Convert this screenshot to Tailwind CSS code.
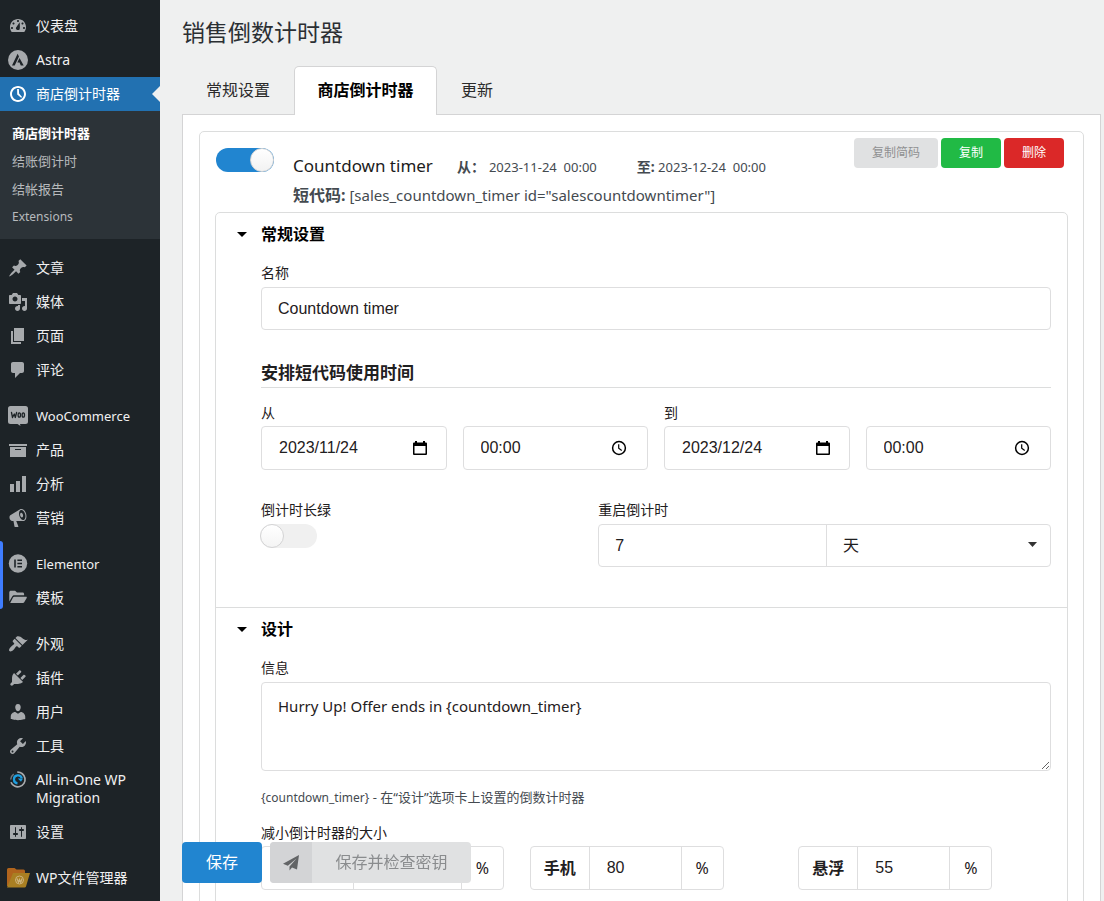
<!DOCTYPE html>
<html lang="zh-CN">
<head>
<meta charset="utf-8">
<title>销售倒数计时器</title>
<script src="https://cdn.jsdelivr.net/npm/@tailwindcss/browser@4"></script>
</head>
<body class="flex h-screen overflow-hidden bg-[#eff0f0] font-['Noto_Sans','Noto_Sans_CJK_SC',sans-serif] text-sm text-black">

<aside class="relative w-40 shrink-0 bg-[#1d2327] pt-[9px] text-[#f0f0f1]">
  <span class="absolute top-[541px] left-0 h-[68px] w-[3px] rounded-r bg-[#3f7dff]"></span>
  <nav class="flex flex-col gap-3">
    <ul>
      <li><a href="#" class="flex gap-2 py-2 pl-2 leading-[18px]">
        <svg class="-my-px size-5 shrink-0 fill-[#a7aaad]" viewBox="0 0 20 20"><path fill-rule="evenodd" d="M3.760 16h12.480C17.340 14.630 18 12.900 18 11c0-4.410-3.580-8-8-8s-8 3.590-8 8c0 1.900.66 3.630 1.760 5zM9 5c0-.55.45-1 1-1s1 .45 1 1c0 .56-.45 1-1 1s-1-.44-1-1zM4.500 7.500c0-.55.45-1 1-1s1 .45 1 1c0 .56-.45 1-1 1s-1-.44-1-1zm4.020 3.400c.84-.83 3.100-4.600 3.100-4.600s.75 6.280-.08 7.110c-.84.84-2.180.84-3.020 0-.83-.83-.83-1.680 0-2.510zM3 12c0-.55.45-1 1-1s1 .45 1 1c0 .56-.45 1-1 1s-1-.44-1-1zM15 12c0-.55.45-1 1-1s1 .45 1 1c0 .56-.45 1-1 1s-1-.44-1-1zM13.500 7.500c0-.55.45-1 1-1s1 .45 1 1c0 .56-.45 1-1 1s-1-.44-1-1z"/></svg>
        <span>仪表盘</span></a></li>
      <li><a href="#" class="flex gap-2 py-2 pl-2 leading-[18px]">
        <svg class="-my-px size-5 shrink-0" viewBox="0 0 20 20"><circle cx="10" cy="10" r="10" fill="#a7aaad"/><path fill="#1d2327" d="M9.600 3.800 4 15.400h2.700l4.300-8.800zM11.500 8 9.300 12.600h2.200l1.300 2.800h2.900z"/></svg>
        <span>Astra</span></a></li>
      <li class="relative"><a href="#" class="flex gap-2 bg-[#2271b1] py-2 pl-2 leading-[18px] text-white">
        <svg class="-my-px size-5 shrink-0 fill-white" viewBox="0 0 20 20"><path d="M10 2c4.420 0 8 3.580 8 8s-3.580 8-8 8-8-3.580-8-8 3.580-8 8-8zm0 14c3.310 0 6-2.690 6-6s-2.690-6-6-6-6 2.690-6 6 2.690 6 6 6zM9.100 5h1.800l.2 4.500 3 3.500-1 .8L9.200 10.500z"/></svg>
        <span>商店倒计时器</span></a>
        <span class="absolute top-[9px] right-0 border-y-8 border-r-8 border-y-transparent border-r-[#eff0f0]"></span>
        <ul class="bg-[#2c3338] pt-2 pb-2 text-[13px] leading-7 text-[#b7babd]">
          <li><a href="#" class="block pl-3 font-bold text-white">商店倒计时器</a></li>
          <li><a href="#" class="block pl-3">结账倒计时</a></li>
          <li><a href="#" class="block pl-3">结帐报告</a></li>
          <li><a href="#" class="block pl-3 text-xs leading-7">Extensions</a></li>
        </ul></li>
    </ul>
    <ul>
      <li><a href="#" class="flex gap-2 py-2 pl-2 leading-[18px]">
        <svg class="-my-px size-5 shrink-0 fill-[#a7aaad]" viewBox="0 0 20 20"><path d="M10.440 3.020l1.820-1.820 6.360 6.350-1.830 1.820c-1.050-.68-2.480-.57-3.410.36l-.75.75c-.92.93-1.040 2.350-.35 3.410l-1.830 1.820-2.410-2.410-2.800 2.790c-.42.42-3.380 2.710-3.800 2.290s1.860-3.390 2.280-3.810l2.790-2.790L4.100 9.360l1.830-1.820c1.050.69 2.480.57 3.400-.36l.75-.75c.93-.92 1.050-2.350.36-3.410z"/></svg>
        <span>文章</span></a></li>
      <li><a href="#" class="flex gap-2 py-2 pl-2 leading-[18px]">
        <svg class="-my-px size-5 shrink-0 fill-[#a7aaad]" viewBox="0 0 20 20"><path fill-rule="evenodd" d="M13 11V4c0-.55-.45-1-1-1h-1.670L9 1H5L3.670 3H2c-.55 0-1 .45-1 1v7c0 .55.45 1 1 1h10c.55 0 1-.45 1-1zM7 4.500c1.380 0 2.500 1.120 2.500 2.500S8.380 9.500 7 9.500 4.500 8.380 4.500 7 5.620 4.500 7 4.500zM14 6h5v10.500c0 1.380-1.120 2.500-2.500 2.500S14 17.880 14 16.500s1.120-2.500 2.500-2.500c.17 0 .34.02.5.05V9h-3V6zm-4 8.050V13h2v3.500c0 1.380-1.120 2.500-2.500 2.500S7 17.880 7 16.500 8.120 14 9.500 14c.17 0 .34.02.5.05z"/></svg>
        <span>媒体</span></a></li>
      <li><a href="#" class="flex gap-2 py-2 pl-2 leading-[18px]">
        <svg class="-my-px size-5 shrink-0 fill-[#a7aaad]" viewBox="0 0 20 20"><path d="M6 15V2h10v13H6zm-1 1h8v2H3V5h2v11z"/></svg>
        <span>页面</span></a></li>
      <li><a href="#" class="flex gap-2 py-2 pl-2 leading-[18px]">
        <svg class="-my-px size-5 shrink-0 fill-[#a7aaad]" viewBox="0 0 20 20"><path d="M5 2h9c1.100 0 2 .9 2 2v7c0 1.100-.9 2-2 2h-2l-5 5v-5H5c-1.100 0-2-.9-2-2V4c0-1.100.9-2 2-2z"/></svg>
        <span>评论</span></a></li>
    </ul>
    <ul>
      <li><a href="#" class="flex gap-2 py-2 pl-2 leading-[18px]">
        <svg class="-my-px size-5 shrink-0" viewBox="0 0 20 20"><path fill="#a7aaad" d="M2.500 0h15A2.500 2.500 0 0 1 20 2.500v13a2.500 2.500 0 0 1-2.500 2.500H12l.5 2-3-2h-7A2.500 2.500 0 0 1 0 15.500v-13A2.500 2.500 0 0 1 2.500 0z"/><g fill="none" stroke="#1d2327" stroke-width="1.300" stroke-linecap="round" stroke-linejoin="round"><path d="M3.500 6.500l1 5L6.300 8l1 3.500 1.300-5"/><ellipse cx="11.300" cy="9" rx="1.200" ry="2.200"/><ellipse cx="15.300" cy="9" rx="1.200" ry="2.200"/></g></svg>
        <span class="text-[13px] leading-[18px]">WooCommerce</span></a></li>
      <li><a href="#" class="flex gap-2 py-2 pl-2 leading-[18px]">
        <svg class="-my-px size-5 shrink-0 fill-[#a7aaad]" viewBox="0 0 20 20"><path d="M19 4v2H1V4h18zM2 7h16v10H2V7zm11 3V9H7v1h6z"/></svg>
        <span>产品</span></a></li>
      <li><a href="#" class="flex gap-2 py-2 pl-2 leading-[18px]">
        <svg class="-my-px size-5 shrink-0 fill-[#a7aaad]" viewBox="0 0 20 20"><path d="M18 18V2h-4v16h4zm-6 0V7H8v11h4zm-6 0v-8H2v8h4z"/></svg>
        <span>分析</span></a></li>
      <li><a href="#" class="flex gap-2 py-2 pl-2 leading-[18px]">
        <svg class="-my-px size-5 shrink-0 fill-[#a7aaad]" viewBox="0 0 20 20"><path fill-rule="evenodd" d="M18.150 5.940c.46 1.620.38 3.220-.02 4.480-.42 1.280-1.260 2.180-2.300 2.480-.16.06-.26.06-.4.06-.06.02-.12.02-.18.02-.06.02-.14.02-.22.02h-6.800l2.220 5.500c.02.14-.06.26-.14.34-.08.1-.24.16-.34.16H6.950c-.1 0-.26-.06-.34-.16-.08-.08-.16-.2-.14-.34l-1-5.500H4.250l-.02-.02c-.5.06-1.080-.18-1.540-.62s-.88-1.080-1.060-1.880c-.24-.8-.2-1.560-.02-2.200.18-.62.58-1.080 1.060-1.300l.02-.02 9-5.400c.1-.06.18-.1.24-.16.06-.04.14-.08.24-.12.16-.08.28-.12.5-.18 1.040-.3 2.240.1 3.220.98s1.840 2.240 2.260 3.860zm-2.580 5.980h-.02c.4-.1.74-.34 1.040-.7.58-.7.86-1.760.86-3.040 0-.64-.1-1.300-.28-1.980-.34-1.360-1.020-2.500-1.780-3.240s-1.680-1.100-2.460-.88c-.82.22-1.400.96-1.700 2-.32 1.040-.28 2.360.06 3.720.38 1.360 1 2.500 1.800 3.240.78.74 1.620 1.100 2.480.88zm-2.540-7.080c.22-.04.42-.02.62.04.38.16.76.48 1.020 1s.42 1.200.42 1.780c0 .3-.04.56-.12.8-.18.48-.44.84-.86.94-.34.1-.8-.06-1.140-.4s-.64-.86-.78-1.500c-.18-.62-.12-1.240.02-1.720s.48-.84.82-.94z"/></svg>
        <span>营销</span></a></li>
    </ul>
    <ul>
      <li><a href="#" class="flex gap-2 py-2 pl-2 leading-[18px]">
        <svg class="-my-px size-5 shrink-0" viewBox="0 0 20 20"><circle cx="10" cy="9.500" r="9.200" fill="#a7aaad"/><path fill="#1d2327" d="M6.200 5.500h1.600v8H6.200zM9.400 5.500h4.600v1.400H9.400zM9.400 8.800h4.600v1.400H9.400zM9.400 12.100h4.600v1.400H9.400z"/></svg>
        <span class="text-[13px] leading-[18px]">Elementor</span></a></li>
      <li><a href="#" class="flex gap-2 py-2 pl-2 leading-[18px]">
        <svg class="-my-px size-5 shrink-0 fill-[#a7aaad]" viewBox="0 0 20 20"><path d="M1.300 13.500V4.300c0-.9.700-1.600 1.600-1.600h4.200l1.900 1.900h5.600c.9 0 1.500.6 1.500 1.500v1.100H6.400c-1 0-1.700.5-2.200 1.300zM2.200 15 5 9.600c.3-.5.7-.8 1.300-.8h11.800c.6 0 .9.600.6 1.100l-2.500 4.400c-.3.500-.7.7-1.200.7z"/></svg>
        <span>模板</span></a></li>
    </ul>
    <ul>
      <li><a href="#" class="flex gap-2 py-2 pl-2 leading-[18px]">
        <svg class="-my-px size-5 shrink-0 fill-[#a7aaad]" viewBox="0 0 20 20"><path d="M14.480 11.060L7.410 3.990l1.500-1.500c.5-.56 2.300-.47 3.510.32 1.210.8 1.430 1.280 2.910 2.100 1.180.64 2.450 1.260 4.450.85zm-.71.71L6.700 4.700 4.930 6.470c-.39.39-.39 1.020 0 1.410l1.060 1.060c.39.39.39 1.030 0 1.420-.6.6-1.430 1.110-2.210 1.690-.35.26-.7.53-1.010.84C1.430 14.230.4 16.080 1.400 17.070c.99 1 2.840-.03 4.180-1.360.31-.31.58-.66.85-1.020.57-.78 1.080-1.610 1.690-2.210.39-.39 1.020-.39 1.410 0l1.060 1.060c.39.39 1.020.39 1.410 0z"/></svg>
        <span>外观</span></a></li>
      <li><a href="#" class="flex gap-2 py-2 pl-2 leading-[18px]">
        <svg class="-my-px size-5 shrink-0 fill-[#a7aaad]" viewBox="0 0 20 20"><path d="M13.110 4.360L9.870 7.600 8 5.730l3.240-3.240c.35-.34 1.050-.2 1.560.32.52.51.66 1.210.31 1.550zm-8 1.770l.91-1.120 9.010 9.010-1.190.84c-.71.71-2.630 1.160-3.820 1.160H6.140L4.900 17.260c-.59.59-1.540.59-2.120 0-.59-.58-.59-1.530 0-2.120l1.240-1.240v-3.880c0-1.130.4-3.190 1.090-3.890zm7.260 3.970l3.240-3.240c.34-.35 1.040-.21 1.550.31.52.51.66 1.210.31 1.550l-3.240 3.250z"/></svg>
        <span>插件</span></a></li>
      <li><a href="#" class="flex gap-2 py-2 pl-2 leading-[18px]">
        <svg class="-my-px size-5 shrink-0 fill-[#a7aaad]" viewBox="0 0 20 20"><path d="M10 9.250c-2.270 0-2.730-3.440-2.730-3.440C7 4.020 7.820 2 9.970 2c2.160 0 2.980 2.020 2.710 3.810 0 0-.41 3.440-2.680 3.440zm0 2.570L12.720 10c2.390 0 4.520 2.330 4.520 4.530v2.490s-3.650 1.130-7.240 1.130c-3.650 0-7.240-1.130-7.240-1.130v-2.490c0-2.250 1.940-4.480 4.470-4.480z"/></svg>
        <span>用户</span></a></li>
      <li><a href="#" class="flex gap-2 py-2 pl-2 leading-[18px]">
        <svg class="-my-px size-5 shrink-0 fill-[#a7aaad]" viewBox="0 0 20 20"><path fill-rule="evenodd" d="M16.680 9.770c-1.340 1.340-3.300 1.670-4.950.99l-5.410 6.520c-.99.99-2.590.99-3.580 0s-.99-2.590 0-3.570l6.520-5.420c-.68-1.650-.35-3.610.99-4.950 1.280-1.280 3.120-1.620 4.720-1.060l-2.890 2.890 2.820 2.820 2.860-2.870c.53 1.580.18 3.390-1.080 4.650zM3.810 16.210c.4.39 1.040.39 1.430 0 .4-.4.4-1.040 0-1.430-.39-.4-1.030-.4-1.430 0-.39.39-.39 1.030 0 1.430z"/></svg>
        <span>工具</span></a></li>
      <li><a href="#" class="flex gap-2 py-2 pl-2 leading-[18px]">
        <svg class="-my-px size-5 shrink-0" viewBox="0 0 20 20" fill="none"><path stroke="#a7aaad" stroke-width="1.700" d="M9.300 2.200a7.300 7.300 0 1 1-6.300 10"/><path stroke="#6f7478" stroke-width="1.500" d="M2.700 9.500a7.300 7.300 0 0 1 3-5.300"/><path stroke="#1e9fe0" stroke-width="2.200" d="M9.500 13.300a4 4 0 1 1 4.300-5"/><path fill="#1e9fe0" d="M9.800 8.500h5.200l-2 3.300z"/></svg>
        <span>All-in-One WP Migration</span></a></li>
      <li><a href="#" class="flex gap-2 py-2 pl-2 leading-[18px]">
        <svg class="-my-px size-5 shrink-0 fill-[#a7aaad]" viewBox="0 0 20 20"><path fill-rule="evenodd" d="M18 16V4c0-.55-.45-1-1-1H3c-.55 0-1 .45-1 1v12c0 .55.45 1 1 1h14c.55 0 1-.45 1-1zM8 11h1c.55 0 1 .45 1 1s-.45 1-1 1H8v1.500c0 .28-.22.5-.5.5s-.5-.22-.5-.5V13H6c-.55 0-1-.45-1-1s.45-1 1-1h1V5.500c0-.28.22-.5.5-.5s.5.22.5.5V11zm5-2h-1c-.55 0-1-.45-1-1s.45-1 1-1h1V5.500c0-.28.22-.5.5-.5s.5.22.5.5V7h1c.55 0 1 .45 1 1s-.45 1-1 1h-1v5.500c0 .28-.22.5-.5.5s-.5-.22-.5-.5V9z"/></svg>
        <span>设置</span></a></li>
    </ul>
    <ul>
      <li><a href="#" class="flex gap-[6px] py-2 pl-[7px] leading-[18px]">
        <svg class="-my-px h-5 w-[23px] shrink-0" viewBox="0 0 23 20"><path fill="#b0641d" d="M1.500 0h6l2 1.500h7A1.500 1.500 0 0 1 18 3v15H0V1.500A1.500 1.500 0 0 1 1.500 0z"/><path fill="#a97f22" d="M6 5h17l-4 13.500a1.500 1.500 0 0 1-1.500 1H0z"/><circle cx="12.500" cy="12" r="4" fill="none" stroke="#cdb37d" stroke-width="1"/><path fill="none" stroke="#cdb37d" stroke-width="1.200" d="M10 10.500l1.500 4 1-3 1.200 3 1.300-4"/></svg>
        <span class="whitespace-nowrap">WP文件管理器</span></a></li>
    </ul>
  </nav>
</aside>

<main class="min-w-0 flex-1 pr-[3px] pl-[22px]">
  <h1 class="pt-4 text-[23px] leading-8 text-[#2b2f33]">销售倒数计时器</h1>

  <div role="tablist" class="mt-[18px] flex text-base leading-6">
    <button role="tab" class="w-28 py-3 text-[#2b2b2b]">常规设置</button>
    <button role="tab" aria-selected="true" class="relative z-10 -mb-px w-[143px] rounded-t-[5px] border border-b-0 border-[#d4d4d5] bg-white pt-[11px] pb-[13px] font-bold">商店倒计时器</button>
    <button role="tab" class="px-6 py-3 text-[#2b2b2b]">更新</button>
  </div>

  <div class="border border-[#d4d4d5] bg-white p-4">
    <div class="rounded-[5px] border border-[#dcdddd] px-[15px] pb-16">
      <header class="flex items-start justify-between px-px pt-[6px]">
        <div class="flex pt-[10px]">
          <input type="checkbox" checked aria-label="启用倒计时器" class="h-6 w-[58px] appearance-none rounded-full bg-[#2185d0] before:ml-auto before:block before:size-6 before:rounded-full before:border before:border-[#d4d4d5] before:bg-linear-to-b before:from-white before:to-[#f2f2f2] before:content-['']">
          <div class="ml-[19px] pt-1 text-[#444a50]">
            <div class="flex items-baseline leading-7">
              <h2 class="text-[17px] text-[#1c1c1c]">Countdown timer</h2>
              <p class="ml-6 text-[13px]"><b class="text-sm">从：</b><span class="ml-1">2023-11-24&nbsp; 00:00</span></p>
              <p class="ml-10 text-[13px]"><b class="text-sm">至:</b> 2023-12-24&nbsp; 00:00</p>
            </div>
            <p class="text-[15px] leading-7"><b class="text-base leading-7">短代码:</b> [sales_countdown_timer id="salescountdowntimer"]</p>
          </div>
        </div>
        <div class="flex gap-[3px] pr-[3px] text-xs leading-[30px]">
          <button class="w-21 rounded bg-[#e0e1e2] text-[#8f9091]">复制简码</button>
          <button class="w-15 rounded bg-[#21ba45] text-white">复制</button>
          <button class="w-15 rounded bg-[#db2828] text-white">删除</button>
        </div>
      </header>

      <div class="mt-[3px] rounded-[5px] border border-[#dcdddd] text-[#1f2021]">
        <section class="border-b border-[#dcdddd] pr-4 pb-10 pl-[45px]">
          <button class="-ml-6 flex items-center pt-[9px] text-base leading-6 font-bold text-black">
            <svg class="mr-[14px] h-[5px] w-[10px]" viewBox="0 0 10 5"><path d="M0 0h10L5 5z"/></svg>常规设置</button>
          <label for="name" class="mt-[17px] block leading-5">名称</label>
          <input id="name" value="Countdown timer" class="mt-1 h-[43px] w-full rounded border border-[#dededf] px-4 font-['Liberation_Sans','Noto_Sans_CJK_SC',sans-serif] text-base">
          <h3 class="mt-[29px] border-b border-[#dcdddd] text-[17px] leading-7 font-bold">安排短代码使用时间</h3>
          <div class="mt-[15px] grid grid-cols-2 gap-4 font-['Liberation_Sans','Noto_Sans_CJK_SC',sans-serif]">
            <div>
              <label for="from-date" class="block leading-5">从</label>
              <div class="mt-[3px] grid grid-cols-2 gap-4 text-base">
                <div class="flex h-11 items-center rounded border border-[#dededf] pr-[19px] pl-[17px]">
                  <input id="from-date" value="2023/11/24" class="w-0 min-w-0 flex-1">
                  <button aria-label="选择日期"><svg class="h-4 w-[14px]" viewBox="0 0 14 16"><path fill-rule="evenodd" d="M2 1h2v1.500h6V1h2v1.500h1a1 1 0 0 1 1 1V14a1 1 0 0 1-1 1H1a1 1 0 0 1-1-1V3.500a1 1 0 0 1 1-1h1zM1.500 6v7.500h11V6z"/></svg></button>
                </div>
                <div class="flex h-11 items-center rounded border border-[#dededf] pr-[20px] pl-[17px]">
                  <input aria-label="开始时间" value="00:00" class="w-0 min-w-0 flex-1">
                  <button aria-label="选择时间"><svg class="size-4" viewBox="0 0 16 16" fill="none" stroke="#000"><circle cx="8" cy="8" r="6.400" stroke-width="1.500"/><path stroke-width="1.200" d="M7.700 4.200V8.300l3 2.200"/></svg></button>
                </div>
              </div>
            </div>
            <div>
              <label for="to-date" class="block leading-5">到</label>
              <div class="mt-[3px] grid grid-cols-2 gap-4 text-base">
                <div class="flex h-11 items-center rounded border border-[#dededf] pr-[19px] pl-[17px]">
                  <input id="to-date" value="2023/12/24" class="w-0 min-w-0 flex-1">
                  <button aria-label="选择日期"><svg class="h-4 w-[14px]" viewBox="0 0 14 16"><path fill-rule="evenodd" d="M2 1h2v1.500h6V1h2v1.500h1a1 1 0 0 1 1 1V14a1 1 0 0 1-1 1H1a1 1 0 0 1-1-1V3.500a1 1 0 0 1 1-1h1zM1.500 6v7.500h11V6z"/></svg></button>
                </div>
                <div class="flex h-11 items-center rounded border border-[#dededf] pr-[20px] pl-[17px]">
                  <input aria-label="结束时间" value="00:00" class="w-0 min-w-0 flex-1">
                  <button aria-label="选择时间"><svg class="size-4" viewBox="0 0 16 16" fill="none" stroke="#000"><circle cx="8" cy="8" r="6.400" stroke-width="1.500"/><path stroke-width="1.200" d="M7.700 4.200V8.300l3 2.200"/></svg></button>
                </div>
              </div>
            </div>
          </div>
          <div class="mt-[30px] grid grid-cols-[5fr_7fr] gap-[14px]">
            <div>
              <label for="evergreen" class="block leading-5">倒计时长绿</label>
              <input id="evergreen" type="checkbox" class="mt-1 -ml-px block h-6 w-[57px] appearance-none rounded-full bg-[#f0f0f0] before:block before:size-6 before:rounded-full before:border before:border-[#d4d4d5] before:bg-linear-to-b before:from-white before:to-[#f4f4f4] before:content-['']">
            </div>
            <div>
              <label for="restart" class="block leading-5">重启倒计时</label>
              <div class="mt-1 flex h-[43px] rounded border border-[#dededf] font-['Liberation_Sans','Noto_Sans_CJK_SC',sans-serif] text-base">
                <input id="restart" value="7" class="w-0 min-w-0 flex-1 border-r border-[#dededf] px-4">
                <div class="relative flex w-[223px]">
                  <select aria-label="时间单位" class="w-full appearance-none px-4"><option>天</option></select>
                  <svg class="pointer-events-none absolute top-[17px] right-[13px] h-[5px] w-[9px] fill-[#333]" viewBox="0 0 9 5"><path d="M0 0h9L4.500 5z"/></svg>
                </div>
              </div>
            </div>
          </div>
        </section>

        <section class="pr-4 pb-10 pl-[45px]">
          <button class="-ml-6 flex items-center pt-[9px] text-base leading-6 font-bold text-black">
            <svg class="mr-[14px] h-[5px] w-[10px]" viewBox="0 0 10 5"><path d="M0 0h10L5 5z"/></svg>设计</button>
          <label for="message" class="mt-[17px] block leading-5">信息</label>
          <textarea id="message" class="mt-1 block h-[89px] w-full rounded border border-[#dededf] px-4 py-[11px] text-[15px] leading-6">Hurry Up! Offer ends in {countdown_timer}</textarea>
          <p class="mt-4 text-[13px] leading-5 text-[#444a50]"><span class="text-xs leading-5">{countdown_timer}</span> - 在“设计”选项卡上设置的倒数计时器</p>
          <p class="mt-[15px] leading-5">减小倒计时器的大小</p>
          <div class="mt-[3px] grid grid-cols-3 gap-4 text-base">
            <div class="flex h-11 w-[243px] items-center rounded border border-[#dededf]">
              <span class="h-full w-[92px] border-r border-[#dededf]"></span>
              <input aria-label="倒计时器大小" class="h-full w-0 min-w-0 flex-1 border-r border-[#dededf] px-4 font-['Liberation_Sans',sans-serif]">
              <span class="w-[41px] text-center">%</span>
            </div>
            <div class="flex h-11 w-[194px] items-center rounded border border-[#dededf]">
              <label for="mobile" class="flex h-full w-[59px] items-center justify-center border-r border-[#dededf] font-bold">手机</label>
              <input id="mobile" value="80" class="h-full w-0 min-w-0 flex-1 border-r border-[#dededf] px-[17px] font-['Liberation_Sans',sans-serif]">
              <span class="w-[41px] text-center">%</span>
            </div>
            <div class="flex h-11 w-[194px] items-center rounded border border-[#dededf]">
              <label for="sticky" class="flex h-full w-[59px] items-center justify-center border-r border-[#dededf] font-bold">悬浮</label>
              <input id="sticky" value="55" class="h-full w-0 min-w-0 flex-1 border-r border-[#dededf] px-[17px] font-['Liberation_Sans',sans-serif]">
              <span class="w-[41px] text-center">%</span>
            </div>
          </div>
        </section>
      </div>
    </div>
  </div>
</main>

<div class="fixed bottom-[18px] left-[182px] z-20 flex gap-2 text-base leading-[41px]">
  <button class="w-20 rounded bg-[#2185d0] text-white">保存</button>
  <button class="flex w-[201px] items-stretch rounded bg-[#e0e1e2] text-[#8a8c8e]">
    <span class="flex w-[42px] items-center justify-center rounded-l bg-[#d3d4d6]">
      <svg class="size-4 fill-[#626466]" viewBox="0 0 16 16"><path d="M16 0 14 14.500 9 12.400 6.500 15.500V11.500L13.500 3.500 4.800 10.700 0 8.800z"/></svg>
    </span>
    <span class="flex-1">保存并检查密钥</span>
  </button>
</div>
</body>
</html>
